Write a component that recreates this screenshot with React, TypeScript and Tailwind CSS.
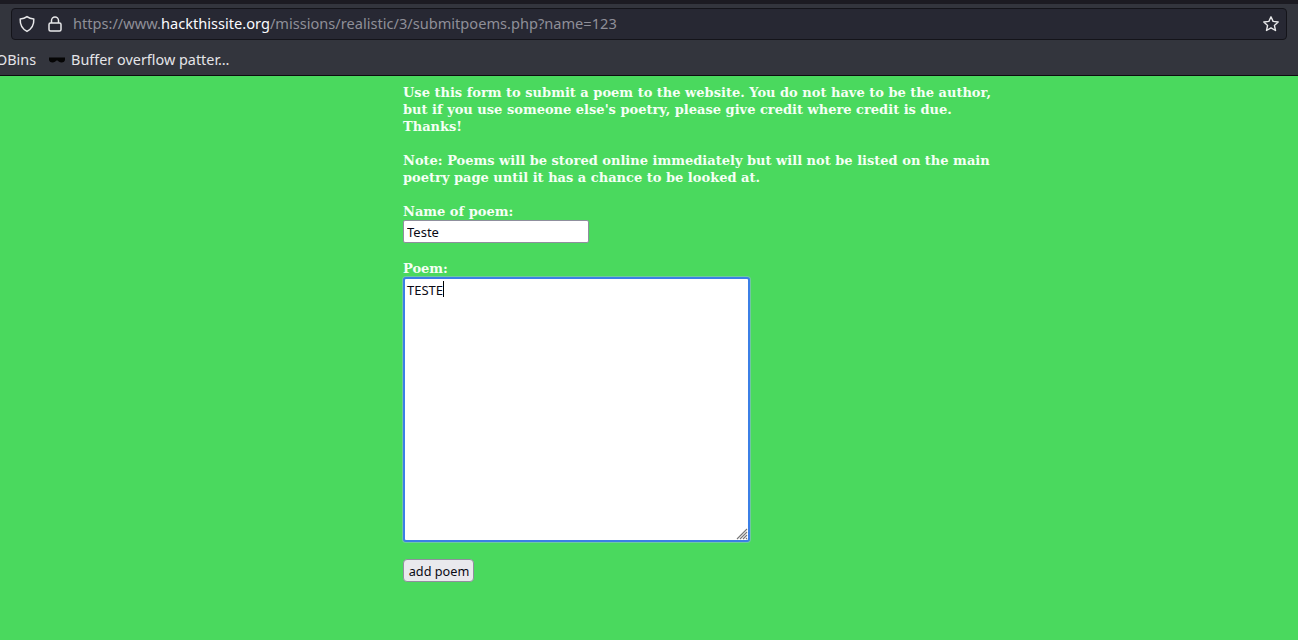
import { useState } from "react";

function BrowserChrome() {
  return (
    <div className="h-[76px] bg-[#33353d] border-b border-[#0c0c0f] font-['Noto_Sans',sans-serif] overflow-hidden">
      <div className="h-[4px] bg-[#1c1b22]" />
      <div className="px-[11px] pt-[4px]">
        <div className="h-[32px] rounded-[4px] bg-[#272833] border border-[#14141a] flex items-center pl-[6px] pr-[6px]">
          <svg width="18" height="18" viewBox="0 0 18 18" fill="none" stroke="#e8e8ea" strokeWidth="1.5" className="shrink-0">
            <path d="M9 1.6 C11 3.2 13 3.8 15.8 3.9 C16.1 9.5 13.6 14 9 16.4 C4.4 14 1.9 9.5 2.2 3.9 C5 3.8 7 3.2 9 1.6 Z" strokeLinejoin="round" />
          </svg>
          <svg width="16" height="18" viewBox="0 0 16 18" fill="none" stroke="#e8e8ea" strokeWidth="1.5" className="shrink-0 ml-[11px]">
            <path d="M4.5 8 V5.5 a3.5 3.5 0 0 1 7 0 V8" />
            <rect x="2" y="8" width="12" height="8" rx="1.5" />
          </svg>
          <span className="ml-[10px] text-[14.6px] text-[#8f8f98] whitespace-nowrap">
            https://www.<span className="text-[#fbfbfe]">hackthissite.org</span>/missions/realistic/3/submitpoems.php?name=123
          </span>
          <svg width="18" height="18" viewBox="0 0 18 18" fill="none" stroke="#e8e8ea" strokeWidth="1.4" className="shrink-0 ml-auto">
            <path d="M9 1.8 L11.1 6.4 L16.2 7 L12.4 10.4 L13.5 15.5 L9 12.9 L4.5 15.5 L5.6 10.4 L1.8 7 L6.9 6.4 Z" strokeLinejoin="round" />
          </svg>
        </div>
      </div>
      <div className="flex items-center h-[35px] pt-[4px] text-[14.4px] text-[#e4e4e8] whitespace-nowrap">
        <span className="-ml-[4px]">OBins</span>
        <svg width="16" height="6" viewBox="0 0 16 6" className="ml-[13px] shrink-0">
          <path d="M0 0.5 H16 V2.5 C16 4.5 14.5 5.5 12.5 5.5 C10.5 5.5 9.5 4 8 3.2 C6.5 4 5.5 5.5 3.5 5.5 C1.5 5.5 0 4.5 0 2.5 Z" fill="#050505" />
        </svg>
        <span className="ml-[6px]">Buffer overflow patter…</span>
      </div>
    </div>
  );
}

export default function App() {
  const [name, setName] = useState("Teste");
  const [poem, setPoem] = useState("TESTE");

  return (
    <div className="h-[640px] overflow-hidden bg-[#4ad95e]">
      <BrowserChrome />
      <div className="pl-[403px] pt-[8px] w-[1000px] font-['DejaVu_Serif',serif] font-bold text-[13px] leading-[17px] text-[#f5fff5]">
        <p className="w-[595px]">
          Use this form to submit a poem to the website. You do not have to be the author, but if you use someone else's poetry, please give credit where credit is due. Thanks!
        </p>
        <p className="w-[595px] mt-[17px]">
          Note: Poems will be stored online immediately but will not be listed on the main poetry page until it has a chance to be looked at.
        </p>
        <form onSubmit={(e) => e.preventDefault()}>
          <label className="block mt-[17px]">Name of poem:</label>
          <input
            type="text"
            value={name}
            onChange={(e) => setName(e.target.value)}
            className="block w-[186px] h-[23px] px-[3px] bg-white border border-[#8f8f9d] rounded-[2px] font-['Noto_Sans',sans-serif] font-normal text-[13px] text-[#0a0a14] outline-none"
          />
          <label className="block mt-[17px]">Poem:</label>
          <div className="relative w-[347px] h-[265px]">
            <textarea
              value={poem}
              onChange={(e) => setPoem(e.target.value)}
              className="block w-full h-full px-[2px] py-[2px] bg-white border-2 border-[#3b7fe6] rounded-[3px] shadow-[0_0_0_1px_#6fc9a0] font-['Noto_Sans',sans-serif] font-normal text-[13px] leading-[18px] text-[#0a0a14] outline-none resize-none"
            />
            <span className="absolute left-[40px] top-[4px] w-px h-[16px] bg-black" />
            <svg width="12" height="12" viewBox="0 0 12 12" stroke="#777" strokeWidth="1.1" className="absolute right-[2px] bottom-[2px]">
              <path d="M11 1 L1 11 M11 4 L4 11 M11 7 L7 11 M11 10 L10 11" />
            </svg>
          </div>
          <button
            type="submit"
            className="block mt-[17px] w-[71px] h-[23px] pt-[1px] pl-[1px] bg-[#e9e9ed] border border-[#8f8f9d] rounded-[4px] font-['Noto_Sans',sans-serif] font-normal text-[12.7px] text-[#0a0a14]"
          >
            add poem
          </button>
        </form>
      </div>
    </div>
  );
}
